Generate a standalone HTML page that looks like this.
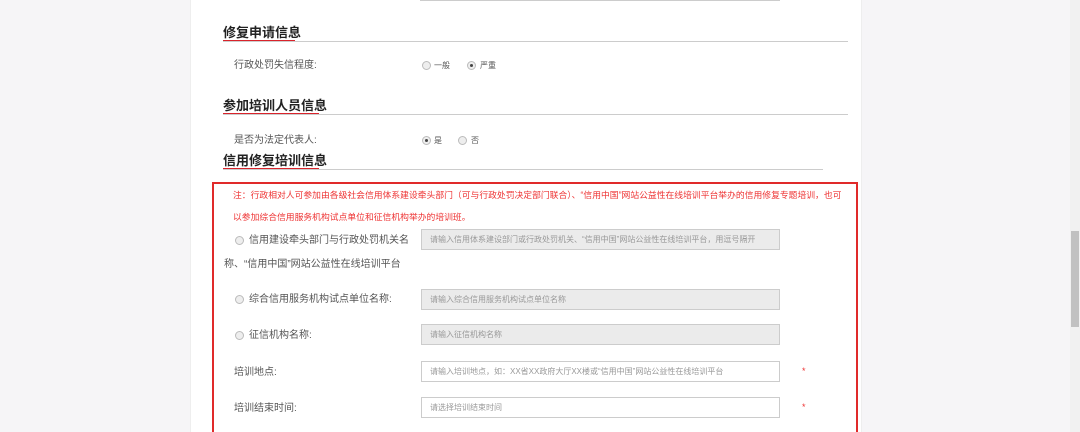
<!DOCTYPE html><html style="overflow:hidden"><head><meta charset="utf-8"><style>
html,body{overflow:hidden}
body{margin:0;width:1080px;height:432px;background:#f6f5f7;font-family:"Liberation Sans","Noto Sans CJK SC",sans-serif;position:relative}
.a{position:absolute;white-space:nowrap;line-height:1}
.panel{position:absolute;left:190px;top:0;width:670px;height:432px;background:#fff;border-left:1px solid #eee;border-right:1px solid #eee}
.h{font-size:13px;font-weight:bold;color:#222}
.ul{position:absolute;height:2px;background:#d9232b}
.gl{position:absolute;height:1px;background:#ccc}
.t{font-size:10px;color:#555}
.r{position:absolute;width:9px;height:9px;border-radius:50%;border:1px solid #bbb;background:#eee;box-sizing:border-box}
.r.on::after{content:"";position:absolute;left:2px;top:2px;width:3px;height:3px;border-radius:50%;background:#444}
.in{position:absolute;left:421px;width:359px;height:21px;border:1px solid #ccc;box-sizing:border-box;font-size:8px;color:#999;line-height:19px;padding-left:8px;white-space:nowrap;overflow:hidden}
.g{background:#ebebeb}
.st{position:absolute;left:802px;color:#e33;font-size:9px;line-height:1}
</style></head><body>
<div class="panel"></div>
<div class="gl" style="left:420px;top:0;width:360px;background:#ccc"></div>
<div class="a h" style="left:223px;top:26px">修复申请信息</div>
<div class="ul" style="left:223px;top:40px;width:72px"></div>
<div class="gl" style="left:223px;top:41px;width:625px"></div>
<div class="a t" style="left:234px;top:61px">行政处罚失信程度:</div>
<div class="r" style="left:422px;top:61px"></div><div class="a t" style="left:434px;top:62px;font-size:8px">一般</div>
<div class="r on" style="left:467px;top:61px"></div><div class="a t" style="left:480px;top:62px;font-size:8px">严重</div>
<div class="a h" style="left:223px;top:99px">参加培训人员信息</div>
<div class="ul" style="left:223px;top:113px;width:96px"></div>
<div class="gl" style="left:223px;top:114px;width:625px"></div>
<div class="a t" style="left:234px;top:136px">是否为法定代表人:</div>
<div class="r on" style="left:422px;top:136px"></div><div class="a t" style="left:434px;top:137px;font-size:8px">是</div>
<div class="r" style="left:458px;top:136px"></div><div class="a t" style="left:471px;top:137px;font-size:8px">否</div>
<div class="a h" style="left:223px;top:154px">信用修复培训信息</div>
<div class="ul" style="left:223px;top:168px;width:96px"></div>
<div class="gl" style="left:223px;top:169px;width:600px"></div>
<div style="position:absolute;left:212px;top:182px;width:646px;height:252px;border:2px solid #e02a2a;border-bottom:none;box-sizing:border-box"></div>
<div class="a" style="left:233px;top:191px;font-size:8.8px;color:#e33">注：行政相对人可参加由各级社会信用体系建设牵头部门（可与行政处罚决定部门联合）、“信用中国”网站公益性在线培训平台举办的信用修复专题培训，也可</div>
<div class="a" style="left:233px;top:213px;font-size:8.8px;color:#e33">以参加综合信用服务机构试点单位和征信机构举办的培训班。</div>
<div class="r" style="left:235px;top:236px"></div>
<div class="a t" style="left:249px;top:236px">信用建设牵头部门与行政处罚机关名</div>
<div class="in g" style="top:229px">请输入信用体系建设部门或行政处罚机关、“信用中国”网站公益性在线培训平台，用逗号隔开</div>
<div class="a t" style="left:224px;top:260px">称、“信用中国”网站公益性在线培训平台</div>
<div class="r" style="left:235px;top:295px"></div>
<div class="a t" style="left:249px;top:295px">综合信用服务机构试点单位名称:</div>
<div class="in g" style="top:289px">请输入综合信用服务机构试点单位名称</div>
<div class="r" style="left:235px;top:331px"></div>
<div class="a t" style="left:249px;top:331px">征信机构名称:</div>
<div class="in g" style="top:324px">请输入征信机构名称</div>
<div class="a t" style="left:234px;top:368px">培训地点:</div>
<div class="in" style="top:361px">请输入培训地点，如：XX省XX政府大厅XX楼或“信用中国”网站公益性在线培训平台</div>
<div class="st" style="top:367px">*</div>
<div class="a t" style="left:234px;top:404px">培训结束时间:</div>
<div class="in" style="top:397px">请选择培训结束时间</div>
<div class="st" style="top:403px">*</div>
<div style="position:absolute;left:1070px;top:0;width:10px;height:432px;background:#f1f1f1"></div>
<div style="position:absolute;left:1071px;top:231px;width:8px;height:96px;background:#c1c1c1"></div>
</body></html>
